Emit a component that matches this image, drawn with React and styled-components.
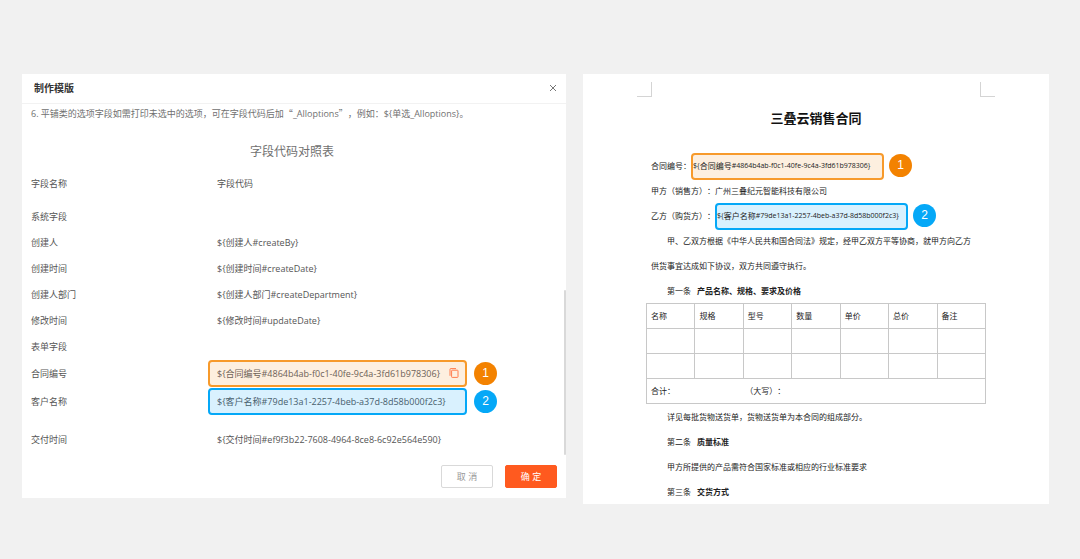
import styled, { createGlobalStyle } from "styled-components";

const ORANGE = "#f38200";
const BLUE = "#05a8f7";

const systemFields = [
  { name: "创建人", code: "${创建人#createBy}" },
  { name: "创建时间", code: "${创建时间#createDate}" },
  { name: "创建人部门", code: "${创建人部门#createDepartment}" },
  { name: "修改时间", code: "${修改时间#updateDate}" },
];

const columns = ["名称", "规格", "型号", "数量", "单价", "总价", "备注"];

const CopyIcon = () => (
  <svg width="10" height="10" viewBox="0 0 10 10" fill="none" stroke="#ff7c4d">
    <path d="M1 7.8V1.2C1 .8 1.2.6 1.6.6H7" />
    <rect x="2.6" y="2.2" width="6.4" height="7.2" rx=".6" />
  </svg>
);

const CloseIcon = () => (
  <svg width="8" height="8" viewBox="0 0 8 8" fill="none" stroke="#777">
    <path d="M1 1l6 6M7 1L1 7" />
  </svg>
);

const App = () => {
  return (
    <>
      <GlobalStyle />
      <Page>
        <Dialog>
          <DialogHeader>
            <DialogTitle>制作模版</DialogTitle>
            <CloseButton aria-label="关闭">
              <CloseIcon />
            </CloseButton>
          </DialogHeader>
          <DialogBody>
            <Hint>
              6. 平铺类的选项字段如需打印未选中的选项，可在字段代码后加<Quote>“</Quote>
              _Alloptions<Quote>”</Quote>，例如：{"${单选_Alloptions}。"}
            </Hint>
            <TableTitle>字段代码对照表</TableTitle>
            <FieldTable>
              <thead>
                <FieldRow $height={39}>
                  <th>字段名称</th>
                  <th>字段代码</th>
                </FieldRow>
              </thead>
              <tbody>
                <FieldRow>
                  <td>系统字段</td>
                  <td />
                </FieldRow>
                {systemFields.map((field) => (
                  <FieldRow key={field.name}>
                    <td>{field.name}</td>
                    <td>{field.code}</td>
                  </FieldRow>
                ))}
                <FieldRow>
                  <td>表单字段</td>
                  <td />
                </FieldRow>
                <FieldRow $height={28}>
                  <td>合同编号</td>
                  <td>
                    <Marked>
                      <FieldMark $color="#f79a2b" $fill="#fdefdf" $text="#6e6258">
                        {"${合同编号#4864b4ab-f0c1-40fe-9c4a-3fd61b978306}"}
                        <CopyButton aria-label="复制">
                          <CopyIcon />
                        </CopyButton>
                      </FieldMark>
                      <Badge $color={ORANGE}>1</Badge>
                    </Marked>
                  </td>
                </FieldRow>
                <FieldRow $height={28}>
                  <td>客户名称</td>
                  <td>
                    <Marked>
                      <FieldMark $color={BLUE} $fill="#d9f1fe" $text="#48606d">
                        {"${客户名称#79de13a1-2257-4beb-a37d-8d58b000f2c3}"}
                      </FieldMark>
                      <Badge $color={BLUE}>2</Badge>
                    </Marked>
                  </td>
                </FieldRow>
                <FieldRow $height={48}>
                  <td>交付时间</td>
                  <td>{"${交付时间#ef9f3b22-7608-4964-8ce8-6c92e564e590}"}</td>
                </FieldRow>
              </tbody>
            </FieldTable>
            <ScrollThumb />
          </DialogBody>
          <DialogFooter>
            <Button>取 消</Button>
            <Button $primary>确 定</Button>
          </DialogFooter>
        </Dialog>

        <Paper>
          <Corners>
            <Corner $side="right" />
            <Corner $side="left" />
          </Corners>
          <PaperBody>
            <PaperTitle>三叠云销售合同</PaperTitle>
            <Line>
              合同编号：
              <PaperMark $color="#f79a2b" $fill="#fdefdf">
                <Latin>{"${"}</Latin>合同编号
                <Latin>{"#4864b4ab-f0c1-40fe-9c4a-3fd61b978306}"}</Latin>
              </PaperMark>
              <Badge $color={ORANGE}>1</Badge>
            </Line>
            <Line>甲方（销售方）：广州三叠纪元智能科技有限公司</Line>
            <Line>
              乙方（购货方）：
              <PaperMark $color={BLUE} $fill="#d9f1fe">
                <Latin>{"${"}</Latin>客户名称
                <Latin>{"#79de13a1-2257-4beb-a37d-8d58b000f2c3}"}</Latin>
              </PaperMark>
              <Badge $color={BLUE}>2</Badge>
            </Line>
            <Paragraph>
              甲、乙双方根据《中华人民共和国合同法》规定，经甲乙双方平等协商，就甲方向乙方
              <br />
              供货事宜达成如下协议，双方共同遵守执行。
            </Paragraph>
            <Paragraph>
              第一条 <b>产品名称、规格、要求及价格</b>
            </Paragraph>
            <GoodsTable>
              <thead>
                <tr>
                  {columns.map((column) => (
                    <th key={column}>{column}</th>
                  ))}
                </tr>
              </thead>
              <tbody>
                {[1, 2].map((row) => (
                  <tr key={row}>
                    {columns.map((column) => (
                      <td key={column} />
                    ))}
                  </tr>
                ))}
                <tr>
                  <td colSpan={7}>
                    <Total>
                      <span>合计：</span>
                      <span>（大写）：</span>
                    </Total>
                  </td>
                </tr>
              </tbody>
            </GoodsTable>
            <Paragraph>详见每批货物送货单，货物送货单为本合同的组成部分。</Paragraph>
            <Paragraph>
              第二条 <b>质量标准</b>
            </Paragraph>
            <Paragraph>甲方所提供的产品需符合国家标准或相应的行业标准要求</Paragraph>
            <Paragraph>
              第三条 <b>交货方式</b>
            </Paragraph>
          </PaperBody>
        </Paper>
      </Page>
    </>
  );
};

export default App;

const GlobalStyle = createGlobalStyle`
  * {
    box-sizing: border-box;
  }

  body {
    margin: 0;
    background: #f1f1f1;
    font-family: "Open Sans", "Noto Sans CJK SC", sans-serif;
    text-spacing-trim: space-all;
  }

  button {
    font-family: inherit;
    cursor: pointer;
  }
`;

const Page = styled.main`
  display: grid;
  grid-template-columns: 544fr 466fr;
  align-items: start;
  gap: 17px;
  min-height: 100vh;
  padding: 74px 31px 0 22px;
`;

const Dialog = styled.section`
  background: #fff;
  color: #555;
  font-size: 9px;
`;

const DialogHeader = styled.header`
  display: flex;
  align-items: center;
  justify-content: space-between;
  height: 30px;
  padding: 0 8px 2px 12px;
  border-bottom: 1px solid #f2f2f2;
`;

const DialogTitle = styled.h1`
  margin: 0;
  color: #333;
  font-size: 10px;
  font-weight: 700;
`;

const CloseButton = styled.button`
  display: flex;
  padding: 1px;
  border: 0;
  background: none;
`;

const DialogBody = styled.div`
  position: relative;
  padding: 0 13px 0 9px;
`;

const Hint = styled.p`
  margin: 0;
  color: #707070;
  line-height: 20px;
`;

const Quote = styled.span`
  font-family: "Noto Sans CJK SC", sans-serif;
`;

const TableTitle = styled.h2`
  margin: 16px 0 0;
  color: #707070;
  font-size: 12px;
  font-weight: 400;
  line-height: 24px;
  text-align: center;
`;

const FieldTable = styled.table`
  width: 100%;
  border-collapse: collapse;
  table-layout: fixed;

  th,
  td {
    padding: 0;
    font-weight: 400;
    text-align: left;
  }

  th:first-child {
    width: 186px;
  }
`;

const FieldRow = styled.tr`
  height: ${(props) => props.$height || 26}px;
`;

const ScrollThumb = styled.div`
  position: absolute;
  right: 0;
  bottom: 8px;
  width: 2px;
  height: 165px;
  border-radius: 1px;
  background: #d9d9d9;
`;

const Marked = styled.div`
  display: flex;
  align-items: center;
  gap: 7px;
  margin-left: -9px;
`;

const Mark = styled.div`
  display: flex;
  flex: none;
  align-items: center;
  height: 27px;
  border: 2px solid ${(props) => props.$color};
  border-radius: 4px;
  background: ${(props) => props.$fill};
  white-space: nowrap;
`;

const FieldMark = styled(Mark)`
  gap: 9px;
  width: 259px;
  padding: 0 7px;
  color: ${(props) => props.$text};
`;

const CopyButton = styled.button`
  display: flex;
  padding: 0;
  border: 0;
  background: none;
`;

const Badge = styled.span`
  flex: none;
  width: 23px;
  height: 23px;
  border-radius: 50%;
  background: ${(props) => props.$color};
  color: #fff;
  font-family: "Liberation Sans", sans-serif;
  font-size: 12px;
  line-height: 23px;
  text-align: center;
`;

const DialogFooter = styled.footer`
  display: flex;
  justify-content: flex-end;
  gap: 12px;
  padding: 2px 9px 10px;
`;

const Button = styled.button`
  width: 52px;
  height: 23px;
  padding: 0;
  border: 1px solid ${(props) => (props.$primary ? "#ff5a1f" : "#d9d9d9")};
  border-radius: 2px;
  background: ${(props) => (props.$primary ? "#ff5a1f" : "#fff")};
  color: ${(props) => (props.$primary ? "#fff" : "#999")};
  font-size: 9px;
`;

const Paper = styled.article`
  background: #fff;
  color: #222;
  font-size: 8px;
  line-height: 25px;
`;

const Corners = styled.div`
  display: flex;
  justify-content: space-between;
  padding: 8px 54px 0;
`;

const Corner = styled.span`
  width: 15px;
  height: 15px;
  border-bottom: 1px solid #d4d4d4;
  border-${(props) => props.$side}: 1px solid #d4d4d4;
`;

const PaperBody = styled.div`
  padding: 0 68px;
`;

const PaperTitle = styled.h2`
  margin: 9px 0 22px;
  color: #111;
  font-size: 13px;
  font-weight: 700;
  text-align: center;
`;

const Line = styled.div`
  display: flex;
  align-items: center;
  gap: 5px;
  height: 25px;
  white-space: nowrap;
`;

const PaperMark = styled(Mark)`
  width: 193px;
  margin: 2px 0 0 -5px;
  padding-bottom: 2px;
`;

const Latin = styled.span`
  font-size: 7px;
`;

const Paragraph = styled.p`
  margin: 0;
  text-indent: 16px;
  white-space: nowrap;

  b {
    margin-left: 4px;
  }
`;

const GoodsTable = styled.table`
  width: calc(100% + 10px);
  margin: 0 -5px;
  border-collapse: collapse;
  table-layout: fixed;

  th,
  td {
    height: 25px;
    padding: 0 4px;
    border: 1px solid #c8c8c8;
    font-weight: 400;
    line-height: 24px;
    text-align: left;
  }
`;

const Total = styled.div`
  display: grid;
  grid-template-columns: 2fr 5fr;
`;
